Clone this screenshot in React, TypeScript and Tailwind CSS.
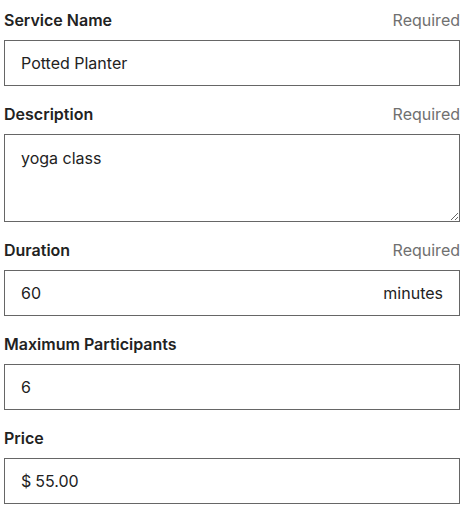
import React, { useState } from 'react';

interface FieldProps {
    label: string;
    required?: boolean;
    children: React.ReactNode;
}

function Field({ label, required, children }: FieldProps) {
    return (
        <div className="mb-4">
            <div className="mb-2 flex h-6 items-center justify-between">
                <label className="text-base font-semibold text-[#222222]">{label}</label>
                {required && <span className="text-base text-[#707070]">Required</span>}
            </div>
            {children}
        </div>
    );
}

const inputClass =
    'block h-[46px] w-full border border-[#666666] bg-white px-4 text-base text-[#222222] outline-none';

export default function App() {
    const [name, setName] = useState('Potted Planter');
    const [description, setDescription] = useState('yoga class');
    const [duration, setDuration] = useState('60');
    const [participants, setParticipants] = useState('6');
    const [price, setPrice] = useState('55.00');

    return (
        <div className="bg-white px-1 pt-2 font-['Inter','Liberation_Sans',sans-serif] text-[#222222]">
            <Field label="Service Name" required>
                <input className={inputClass} value={name} onChange={(e) => setName(e.target.value)} />
            </Field>

            <Field label="Description" required>
                <textarea
                    className="block h-[88px] w-full border border-[#666666] bg-white px-4 py-[11px] text-base leading-6 text-[#222222] outline-none"
                    value={description}
                    onChange={(e) => setDescription(e.target.value)}
                />
            </Field>

            <Field label="Duration" required>
                <div className="flex h-[46px] w-full items-center border border-[#666666] bg-white px-4">
                    <input
                        className="min-w-0 flex-1 text-base text-[#222222] outline-none"
                        value={duration}
                        onChange={(e) => setDuration(e.target.value)}
                    />
                    <span className="text-base text-[#222222]">minutes</span>
                </div>
            </Field>

            <Field label="Maximum Participants">
                <input className={inputClass} value={participants} onChange={(e) => setParticipants(e.target.value)} />
            </Field>

            <Field label="Price">
                <div className="flex h-[46px] w-full items-center border border-[#666666] bg-white px-4">
                    <span className="mr-1 text-base text-[#222222]">$</span>
                    <input
                        className="min-w-0 flex-1 text-base text-[#222222] outline-none"
                        value={price}
                        onChange={(e) => setPrice(e.target.value)}
                    />
                </div>
            </Field>
        </div>
    );
}
